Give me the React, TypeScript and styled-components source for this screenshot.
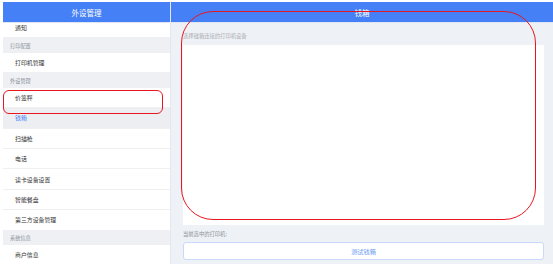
import React from "react";
import styled, { createGlobalStyle } from "styled-components";

const Global = createGlobalStyle`
  html, body { margin: 0; padding: 0; background: #fff; }
  body { font-family: "Noto Sans CJK SC", "Noto Sans", sans-serif; }
`;

const Page = styled.div`
  position: relative;
  width: 553px;
  height: 264px;
  box-sizing: border-box;
  padding: 2px 0 0 3px;
  overflow: hidden;
  display: flex;
`;

const Sidebar = styled.aside`
  width: 168px;
  flex: none;
  display: flex;
  flex-direction: column;
  border-right: 1px solid #e4e7ec;
  box-sizing: border-box;
  background: #fff;
`;

const Header = styled.div`
  height: 20px;
  flex: none;
  background: #4680f6;
  color: #fff;
  font-size: 7.5px;
  display: flex;
  align-items: center;
  justify-content: center;
  border-bottom: 1px solid #dfe6f3;
`;

const List = styled.div`
  flex: 1;
  overflow: hidden;
  display: flex;
  flex-direction: column;
`;

const Item = styled.div<{ $active?: boolean; $first?: boolean }>`
  height: 20.4px;
  flex: none;
  box-sizing: border-box;
  display: flex;
  align-items: center;
  padding-left: 12px;
  font-size: 5.9px;
  color: ${(p) => (p.$active ? "#4a82f5" : "#333")};
  background: ${(p) => (p.$active ? "#eceef2" : "#fff")};
  border-bottom: 1px solid #eef0f3;
  margin-top: ${(p) => (p.$first ? "-5px" : "0")};
`;

const Group = styled.div`
  height: 14.5px;
  flex: none;
  display: flex;
  align-items: center;
  padding-left: 7px;
  font-size: 5.2px;
  color: #8a8f98;
  background: #eef0f4;
`;

const Main = styled.main`
  flex: 1;
  display: flex;
  flex-direction: column;
  background: #eef1f5;
`;

const Content = styled.div`
  flex: 1;
  display: flex;
  flex-direction: column;
  padding: 8px 9px 0 11px;
`;

const Label = styled.div`
  font-size: 5.3px;
  color: #a9adb4;
  height: 10px;
  display: flex;
  align-items: center;
  padding-left: 1px;
`;

const DeviceBox = styled.div`
  margin-top: 4px;
  height: 180px;
  background: #fff;
  margin-left: 1px;
`;

const Current = styled(Label)`
  margin-top: 4px;
  color: #8d9199;
`;

const TestButton = styled.button`
  margin-top: 3px;
  margin-left: 1px;
  height: 18px;
  background: #fff;
  border: 1px solid #c8d9fb;
  border-radius: 3px;
  color: #6b98f4;
  font-family: inherit;
  font-size: 6.2px;
  padding: 0;
  cursor: pointer;
`;

const Annotation = styled.div<{ $r: number }>`
  position: absolute;
  border: 1.3px solid #e8171f;
  border-radius: ${(p) => p.$r}px;
  box-sizing: border-box;
  pointer-events: none;
`;

export default function App() {
  return (
    <>
      <Global />
      <Page>
        <Sidebar>
          <Header>外设管理</Header>
          <List>
            <Item $first>通知</Item>
            <Group>打印配置</Group>
            <Item>打印机管理</Item>
            <Group>外设管理</Group>
            <Item>价签秤</Item>
            <Item $active>钱箱</Item>
            <Item>扫描枪</Item>
            <Item>电话</Item>
            <Item>读卡设备设置</Item>
            <Item>智能餐盘</Item>
            <Item>第三方设备管理</Item>
            <Group>系统信息</Group>
            <Item>商户信息</Item>
          </List>
        </Sidebar>
        <Main>
          <Header>钱箱</Header>
          <Content>
            <Label>选择钱箱连接的打印机设备</Label>
            <DeviceBox />
            <Current>当前选中的打印机:</Current>
            <TestButton>测试钱箱</TestButton>
          </Content>
        </Main>
        <Annotation $r={32} style={{ left: 181, top: 11, width: 355, height: 209 }} />
        <Annotation $r={6} style={{ left: 3, top: 90, width: 160, height: 24 }} />
      </Page>
    </>
  );
}
